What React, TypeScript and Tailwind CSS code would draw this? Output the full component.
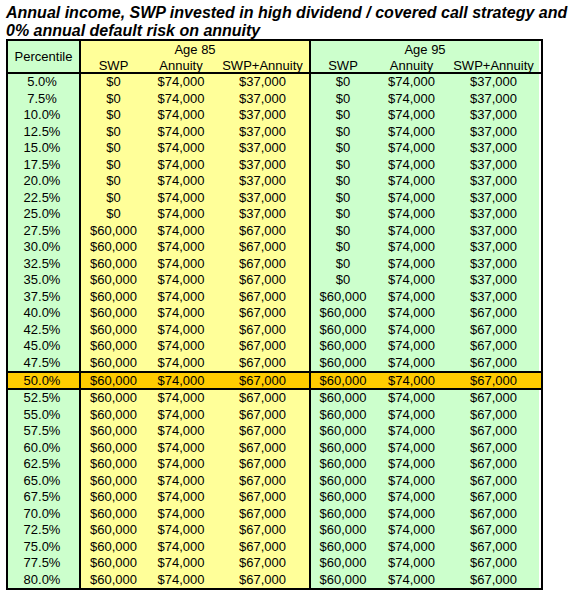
import React from 'react';

type Row = {
  pct: string;
  a85: [string, string, string];
  a95: [string, string, string];
};

// percentiles 5.0% .. 80.0% in steps of 2.5
const rows: Row[] = Array.from({ length: 31 }, (_, i) => {
  const p = 5 + i * 2.5;
  const swp85 = p >= 27.5 ? '$60,000' : '$0';
  const tot85 = p >= 27.5 ? '$67,000' : '$37,000';
  const swp95 = p >= 37.5 ? '$60,000' : '$0';
  const tot95 = p >= 40 ? '$67,000' : '$37,000';
  return {
    pct: `${p.toFixed(1)}%`,
    a85: [swp85, '$74,000', tot85],
    a95: [swp95, '$74,000', tot95],
  };
});

const w85 = ['w-[65px]', 'w-[70px]', 'w-[93px]'];
const w95 = ['w-[64px]', 'w-[73px]', 'w-[91px]'];
const subHeads = ['SWP', 'Annuity', 'SWP+Annuity'];

const DataRow = ({ row }: { row: Row }) => {
  const mid = row.pct === '50.0%';
  return (
    <div
      className={`flex ${mid ? 'h-[19px] border-y-2 border-black bg-[#ffcc00]' : 'h-[16.5px]'}`}
    >
      <div
        className={`w-[73px] flex items-center justify-center pr-[3px] border-r-2 border-black ${mid ? '' : 'bg-[#ccffcc]'}`}
      >
        {row.pct}
      </div>
      <div className={`flex ${mid ? '' : 'bg-[#ffff99]'}`}>
        {row.a85.map((v, i) => (
          <div key={i} className={`${w85[i]} flex items-center justify-center`}>
            {v}
          </div>
        ))}
      </div>
      <div className={`flex border-l-2 border-black ${mid ? '' : 'bg-[#ccffcc]'}`}>
        {row.a95.map((v, i) => (
          <div key={i} className={`${w95[i]} flex items-center justify-center`}>
            {v}
          </div>
        ))}
      </div>
    </div>
  );
};

const App = () => {
  return (
    <main className="w-[573px] h-[599px] bg-white text-black font-['Liberation_Sans',Arial,sans-serif] overflow-hidden">
      <h1 className="h-[39px] pl-[6px] pt-[4px] text-[16px] leading-[18px] font-bold italic whitespace-nowrap">
        Annual income, SWP invested in high dividend / covered call strategy and
        <br />
        0% annual default risk on annuity
      </h1>

      <div className="ml-[6px] w-[537px] border-2 border-black text-[13px] leading-[16px]">
        {/* header */}
        <div className="flex h-[33px] border-b-2 border-black">
          <div className="w-[73px] flex items-center justify-center bg-[#ccffcc] border-r-2 border-black">
            Percentile
          </div>
          <div className="w-[228px] flex flex-col bg-[#ffff99]">
            <div className="h-[17px] pt-[1px] text-center">Age 85</div>
            <div className="flex h-[14px]">
              {subHeads.map((h, i) => (
                <div key={h} className={`${w85[i]} text-center whitespace-nowrap`}>
                  {h}
                </div>
              ))}
            </div>
          </div>
          <div className="w-[230px] flex flex-col bg-[#ccffcc] border-l-2 border-black">
            <div className="h-[17px] pt-[1px] text-center">Age 95</div>
            <div className="flex h-[14px]">
              {subHeads.map((h, i) => (
                <div key={h} className={`${w95[i]} text-center whitespace-nowrap`}>
                  {h}
                </div>
              ))}
            </div>
          </div>
        </div>

        {rows.map((r) => (
          <DataRow key={r.pct} row={r} />
        ))}
      </div>
    </main>
  );
};

export default App;
